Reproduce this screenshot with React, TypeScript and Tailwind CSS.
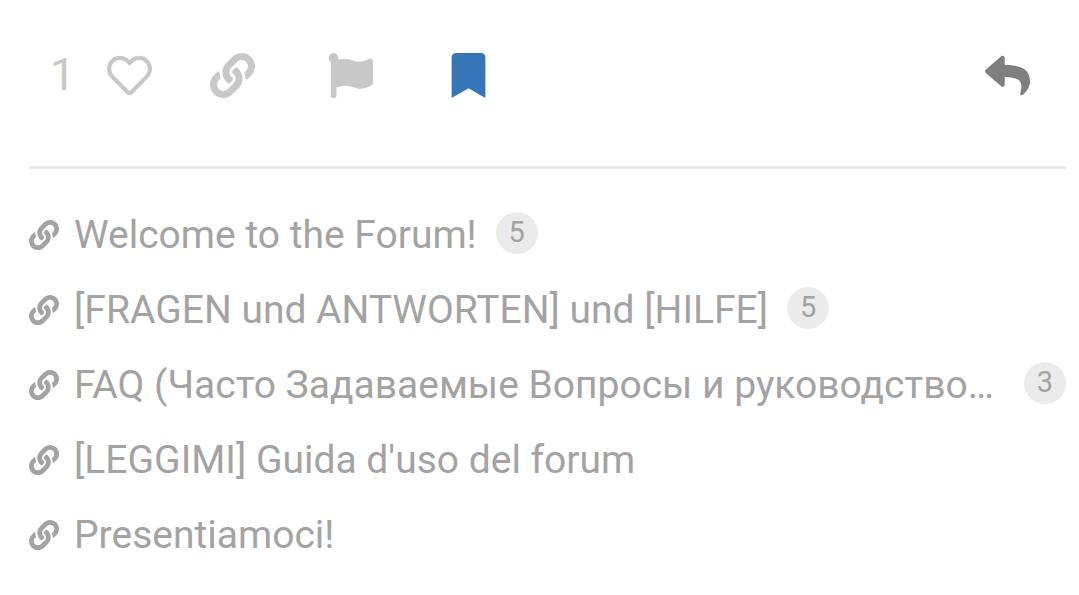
import React from 'react';
import { FaLink, FaRegHeart, FaFlag, FaBookmark, FaReply } from 'react-icons/fa';
import clsx from 'clsx';

interface TopicLink {
  title: string;
  clicks?: number;
  shortened?: boolean;
}

const links: TopicLink[] = [
  { title: 'Welcome to the Forum!', clicks: 5 },
  { title: '[FRAGEN und ANTWORTEN] und [HILFE]', clicks: 5 },
  { title: 'FAQ (Часто Задаваемые Вопросы и руководство…', clicks: 3, shortened: true },
  { title: "[LEGGIMI] Guida d'uso del forum" },
  { title: 'Presentiamoci!' },
];

const PostControls: React.FC = () => (
  <div className="flex items-center pt-13 pr-9 pl-[21px] text-[45px] text-[#c8c8c8]">
    <button type="button" aria-label="1 like" className="leading-[46px]">1</button>
    <button type="button" aria-label="Like" className="ml-8">
      <FaRegHeart />
    </button>
    <button type="button" aria-label="Copy link" className="ml-[58px]">
      <FaLink />
    </button>
    <button type="button" aria-label="Flag" className="ml-[73px]">
      <FaFlag />
    </button>
    <button type="button" aria-label="Bookmark" className="ml-[73px] text-[#3575b8]">
      <FaBookmark />
    </button>
    <button type="button" aria-label="Reply" className="ml-auto text-[#7f7f7f]">
      <FaReply />
    </button>
  </div>
);

const TopicRow: React.FC<{ link: TopicLink }> = ({ link }) => (
  <li className="flex h-[75px] items-center">
    <a href="#" className={clsx('flex min-w-0 items-center gap-[15px]', link.shortened && 'flex-1')}>
      <FaLink className="size-[30px] shrink-0" />
      <span className="truncate text-[39px] leading-[54px]">{link.title}</span>
    </a>
    {link.clicks && (
      <span className="mb-1 ml-[19px] flex size-[42px] shrink-0 items-center justify-center rounded-full bg-[#ebebeb] text-[29px]">
        {link.clicks}
      </span>
    )}
  </li>
);

export default function App() {
  return (
    <main className="min-h-screen bg-white pr-[13px] pl-[29px] font-['Roboto',sans-serif] text-[#a3a3a3]">
      <PostControls />
      <ul className="mt-[68px] border-t-3 border-[#e9e9e9] pt-7">
        {links.map((link) => (
          <TopicRow key={link.title} link={link} />
        ))}
      </ul>
    </main>
  );
}
